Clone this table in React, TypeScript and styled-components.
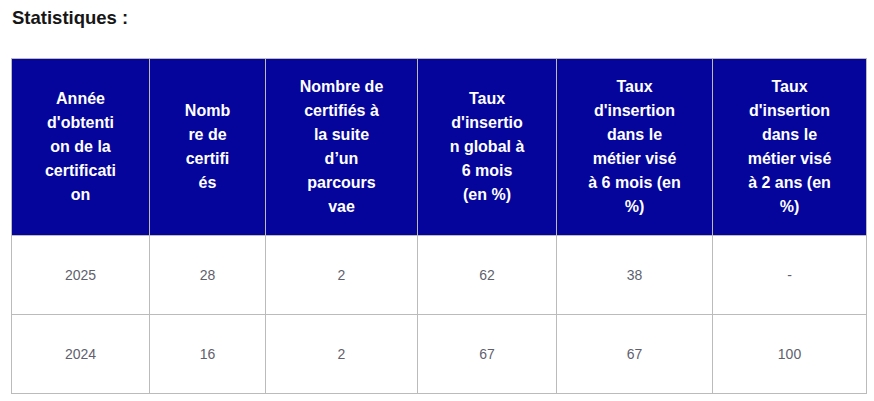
import styled, { createGlobalStyle } from "styled-components";

const GlobalStyle = createGlobalStyle`
  html, body {
    margin: 0;
    padding: 0;
    background: #ffffff;
  }
  body {
    font-family: "Liberation Sans", Arial, sans-serif;
    color: #161616;
  }
`;

const Page = styled.div`
  padding: 4px 8px 0 11px;
`;

const Title = styled.h2`
  margin: 0 0 26px 1px;
  font-size: 18.5px;
  line-height: 28px;
  font-weight: 700;
  color: #161616;
`;

const Table = styled.table`
  border-collapse: collapse;
  table-layout: fixed;
  width: 856px;
`;

const HeadCell = styled.th<{ $pad: number }>`
  background: #05059b;
  color: #ffffff;
  font-size: 16px;
  line-height: 24px;
  font-weight: 700;
  text-align: center;
  vertical-align: middle;
  padding: 16px ${(p) => p.$pad}px;
  border: 1px solid #bbbbbb;
  overflow-wrap: anywhere;
`;

const Cell = styled.td`
  color: #5f5f6e;
  font-size: 14px;
  line-height: 24px;
  text-align: center;
  vertical-align: middle;
  padding: 27px 16px;
  border: 1px solid #bbbbbb;
`;

const columns = [
  { label: "Année d'obtention de la certification", width: 138, pad: 32 },
  { label: "Nombre de certifiés", width: 116, pad: 33 },
  { label: "Nombre de certifiés à la suite d’un parcours vae", width: 152, pad: 30 },
  { label: "Taux d'insertion global à 6 mois (en %)", width: 139, pad: 30 },
  { label: "Taux d'insertion dans le métier visé à 6 mois (en %)", width: 156, pad: 30 },
  { label: "Taux d'insertion dans le métier visé à 2 ans (en %)", width: 154, pad: 30 },
];

const rows = [
  ["2025", "28", "2", "62", "38", "-"],
  ["2024", "16", "2", "67", "67", "100"],
];

export default function App() {
  return (
    <>
      <GlobalStyle />
      <Page>
        <Title>Statistiques :</Title>
        <Table>
          <colgroup>
            {columns.map((c) => (
              <col key={c.label} style={{ width: c.width }} />
            ))}
          </colgroup>
          <thead>
            <tr>
              {columns.map((c) => (
                <HeadCell key={c.label} $pad={c.pad}>
                  {c.label}
                </HeadCell>
              ))}
            </tr>
          </thead>
          <tbody>
            {rows.map((r) => (
              <tr key={r[0]}>
                {r.map((v, i) => (
                  <Cell key={i}>{v}</Cell>
                ))}
              </tr>
            ))}
          </tbody>
        </Table>
      </Page>
    </>
  );
}
